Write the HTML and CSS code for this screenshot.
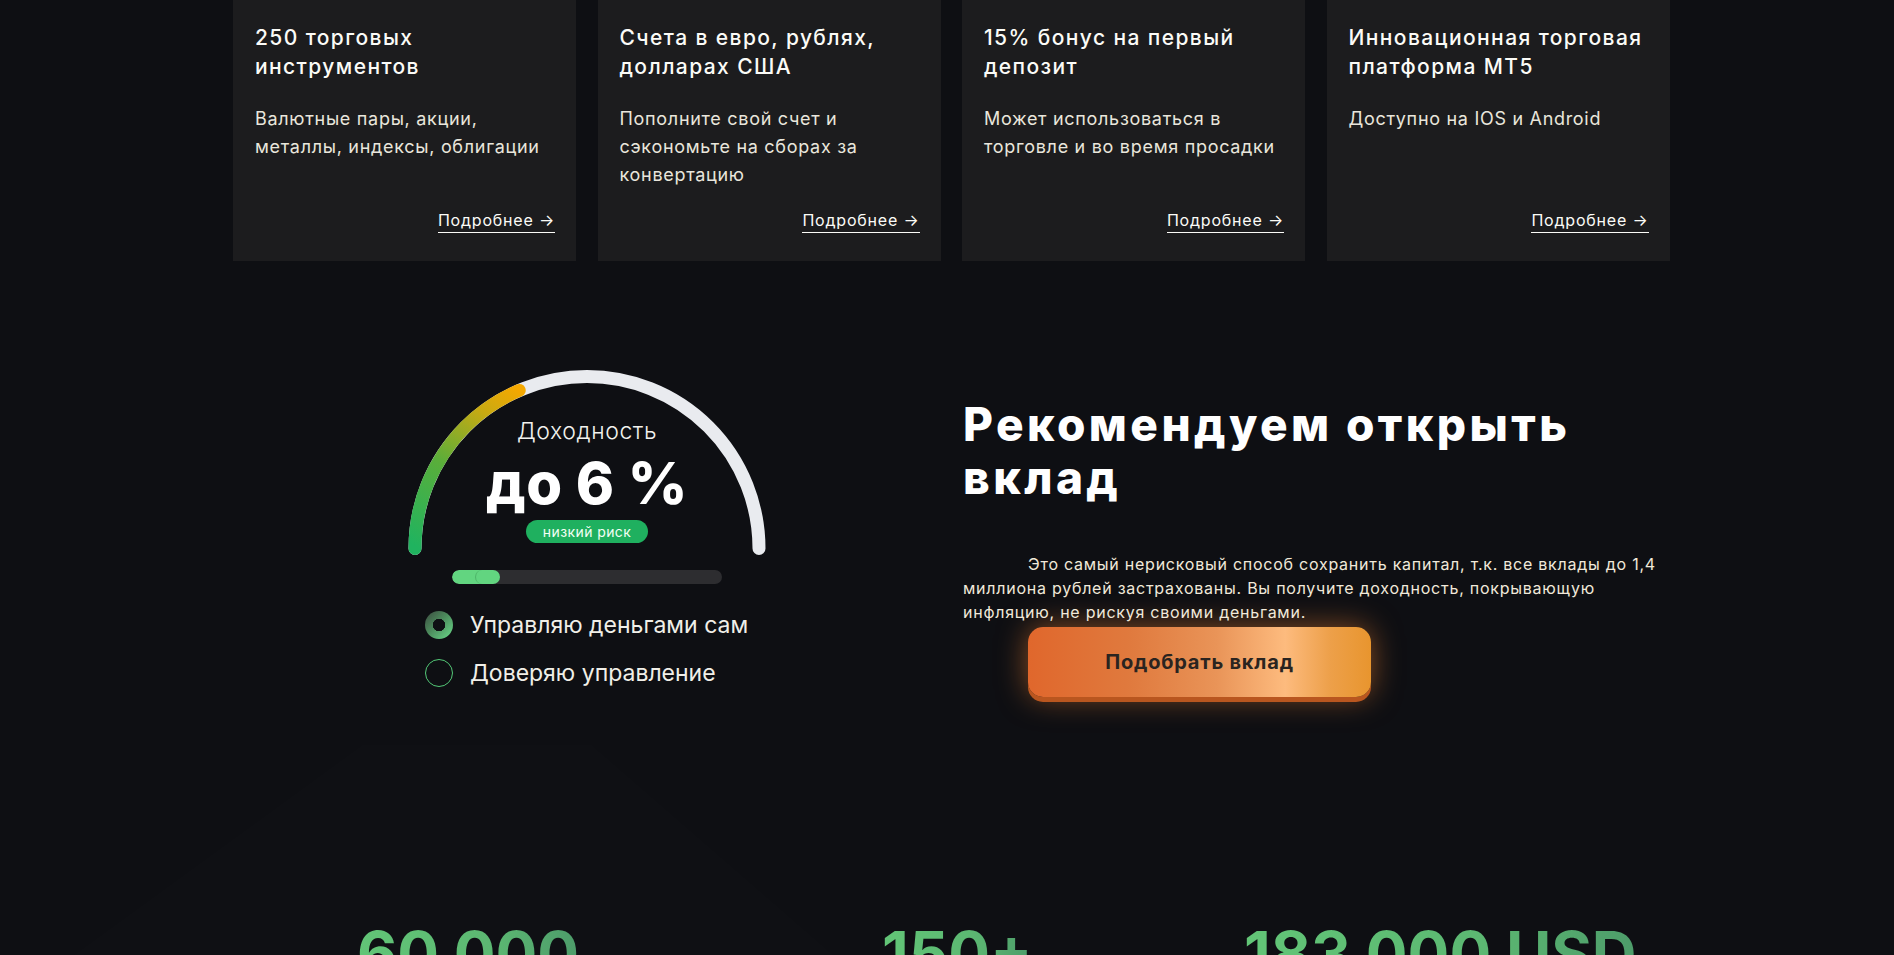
FILE: index.html
```html
<!DOCTYPE html>
<html lang="ru">
<head>
<meta charset="utf-8">
<title>Вклады</title>
<link rel="stylesheet" href="styles.css">
</head>
<body>
<section class="features">
  <article class="card">
    <h3 class="card-title">250 торговых инструментов</h3>
    <p class="card-text">Валютные пары, акции, металлы, индексы, облигации</p>
    <a class="card-link" href="#">Подробнее →</a>
  </article>
  <article class="card">
    <h3 class="card-title">Счета в евро, рублях, долларах США</h3>
    <p class="card-text">Пополните свой счет и сэкономьте на сборах за конвертацию</p>
    <a class="card-link" href="#">Подробнее →</a>
  </article>
  <article class="card">
    <h3 class="card-title">15% бонус на первый депозит</h3>
    <p class="card-text">Может использоваться в торговле и во время просадки</p>
    <a class="card-link" href="#">Подробнее →</a>
  </article>
  <article class="card">
    <h3 class="card-title">Инновационная торговая платформа MT5</h3>
    <p class="card-text">Доступно на IOS и Android</p>
    <a class="card-link" href="#">Подробнее →</a>
  </article>
</section>

<section class="deposit">
  <div class="risk">
    <div class="gauge">
      <svg class="gauge-arc" width="358" height="190" viewBox="0 0 358 190">
        <defs>
          <linearGradient id="g-arc" gradientUnits="userSpaceOnUse" x1="10" y1="180" x2="112" y2="22">
            <stop offset="0" stop-color="#20b35f"/>
            <stop offset="0.45" stop-color="#5aae3a"/>
            <stop offset="0.8" stop-color="#c9aa12"/>
            <stop offset="1" stop-color="#f5a800"/>
          </linearGradient>
        </defs>
        <path d="M 7 180.5 A 172 172 0 0 1 351 180.5" fill="none" stroke="#e9ebef" stroke-width="13" stroke-linecap="round"/>
        <path d="M 7 180.5 A 172 172 0 0 1 111.2 22.4" fill="none" stroke="url(#g-arc)" stroke-width="13" stroke-linecap="round"/>
      </svg>
      <div class="gauge-label">Доходность</div>
      <div class="gauge-value">до 6 %</div>
      <div class="gauge-pill">низкий риск</div>
    </div>
    <div class="bar"><div class="bar-fill" style="width:48px"><span class="bar-thumb"></span></div></div>
    <ul class="choices">
      <li class="choice"><span class="radio radio-on"></span>Управляю деньгами сам</li>
      <li class="choice"><span class="radio"></span>Доверяю управление</li>
    </ul>
  </div>
  <div class="offer">
    <h2 class="offer-title">Рекомендуем открыть вклад</h2>
    <p class="offer-text">Это самый нерисковый способ сохранить капитал, т.к. все вклады до 1,4 миллиона рублей застрахованы. Вы получите доходность, покрывающую инфляцию, не рискуя своими деньгами.</p>
    <button class="offer-btn" type="button">Подобрать вклад</button>
  </div>
</section>

<section class="stats">
  <div class="stat">60 000</div>
  <div class="stat">150+</div>
  <div class="stat">183 000 USD</div>
</section>
</body>
</html>
```
FILE: styles.css
```css
* { box-sizing: border-box; }
html, body { margin: 0; padding: 0; }
body {
  background-color: #0e0f13;
  background-image: url("data:image/svg+xml;utf8,<svg xmlns='http://www.w3.org/2000/svg' width='900' height='220' viewBox='0 0 900 220'><polygon points='362,0 592,0 845,220 60,220' fill='%23ffffff' fill-opacity='0.006'/><polygon points='220,55 640,55 775,130 180,130' fill='%23ffffff' fill-opacity='0.005'/></svg>");
  background-repeat: no-repeat;
  background-position: 0 745px;
  color: #f4f1ea;
  font-family: "Inter", "Noto Sans", sans-serif;
  width: 1894px;
  height: 955px;
  overflow: hidden;
}

.features {
  display: grid;
  grid-template-columns: repeat(4, 343px);
  column-gap: 21.5px;
  margin-left: 233px;
}
.card {
  background: #1c1c1e;
  height: 261px;
  padding: 23px 21px 28px 22px;
  display: flex;
  flex-direction: column;
}
.card-title {
  margin: 0;
  font-size: 21px;
  line-height: 29px;
  font-weight: 500;
  letter-spacing: 1.4px;
  color: #fbfbf7;
}
.card-text {
  margin: 24px 0 0;
  font-size: 18px;
  line-height: 28px;
  font-weight: 400;
  letter-spacing: 0.7px;
  color: #e9e6dc;
}
.card-link {
  margin-top: auto;
  align-self: flex-end;
  color: #fbfbf7;
  text-decoration: none;
  font-size: 16px;
  line-height: 20px;
  letter-spacing: 0.8px;
  border-bottom: 1px solid #fbfbf7;
  padding-bottom: 2px;
}

.deposit {
  display: flex;
  gap: 197px;
  margin-left: 408px;
  margin-top: 107px;
}
.risk {
  width: 358px;
  display: flex;
  flex-direction: column;
  align-items: center;
}
.gauge {
  position: relative;
  width: 358px;
  height: 190px;
  display: flex;
  flex-direction: column;
  align-items: center;
  padding-top: 48px;
}
.gauge-arc {
  position: absolute;
  left: 0;
  top: 0;
}
.gauge-label {
  position: relative;
  font-size: 23px;
  line-height: 30px;
  font-weight: 300;
  letter-spacing: 0.6px;
  color: #f2f2ee;
}
.gauge-value {
  position: relative;
  margin-top: 5px;
  font-size: 58px;
  line-height: 64px;
  font-weight: 800;
  color: #ffffff;
  letter-spacing: 0.5px;
}
.gauge-pill {
  position: relative;
  margin-top: 5px;
  width: 122px;
  height: 23px;
  border-radius: 12px;
  background: #1fb05f;
  color: #f3fff5;
  font-size: 14px;
  line-height: 23px;
  letter-spacing: 0.4px;
  text-align: center;
}
.bar {
  margin-top: 12px;
  width: 270px;
  height: 14px;
  border-radius: 7px;
  background: #2d2d30;
  overflow: hidden;
}
.bar-fill {
  height: 14px;
  border-radius: 7px;
  background: #62d580;
  position: relative;
}
.bar-thumb {
  position: absolute;
  left: 23px;
  top: 0;
  width: 14px;
  height: 14px;
  border-radius: 50%;
  border-left: 1px solid rgba(40, 120, 60, 0.35);
}
.choices {
  list-style: none;
  margin: 27px 0 0;
  padding: 0 0 0 17px;
  align-self: stretch;
  display: flex;
  flex-direction: column;
  gap: 20px;
}
.choice {
  display: flex;
  align-items: center;
  gap: 17px;
  font-size: 23px;
  line-height: 28px;
  font-weight: 400;
  color: #f1efe8;
}
.radio {
  width: 28px;
  height: 28px;
  border-radius: 50%;
  border: 1.5px solid #53c877;
  flex: none;
}
.radio-on {
  border: none;
  background:
    radial-gradient(circle at 50% 50%, #0f1114 0 6px, transparent 6.5px),
    linear-gradient(135deg, #3b4a40 0%, #4c8a5c 45%, #6bdc8b 100%);
}

.offer {
  width: 700px;
  padding-top: 30px;
}
.offer-title {
  margin: 0;
  font-size: 46px;
  line-height: 53px;
  font-weight: 800;
  letter-spacing: 3.4px;
  color: #ffffff;
}
.offer-text {
  margin: 48px 0 0;
  text-indent: 65px;
  font-size: 16px;
  line-height: 24px;
  letter-spacing: 0.75px;
  color: #f1e9da;
}
.offer-btn {
  display: block;
  margin: 3px 0 0 65px;
  width: 343px;
  height: 70px;
  border: none;
  border-radius: 15px;
  font-family: inherit;
  font-size: 20px;
  font-weight: 700;
  letter-spacing: 0.8px;
  color: #2a2420;
  background: linear-gradient(90deg, #e0672c 0%, #e07a3e 30%, #e99458 55%, #fdbb7e 75%, #eda04a 88%, #e8952e 100%);
  box-shadow: 0 5px 0 #b9561f, 0 0 30px rgba(240, 130, 50, 0.55);
  cursor: pointer;
}

.stats {
  display: grid;
  grid-template-columns: 525px 362px auto;
  margin-left: 357px;
  margin-top: 222px;
}
.stat {
  font-size: 62px;
  line-height: 70px;
  font-weight: 700;
  background: linear-gradient(90deg, #62c577 0%, #5cb872 60%, #4d9c6a 100%);
  -webkit-background-clip: text;
  background-clip: text;
  color: transparent;
  justify-self: start;
}
```
